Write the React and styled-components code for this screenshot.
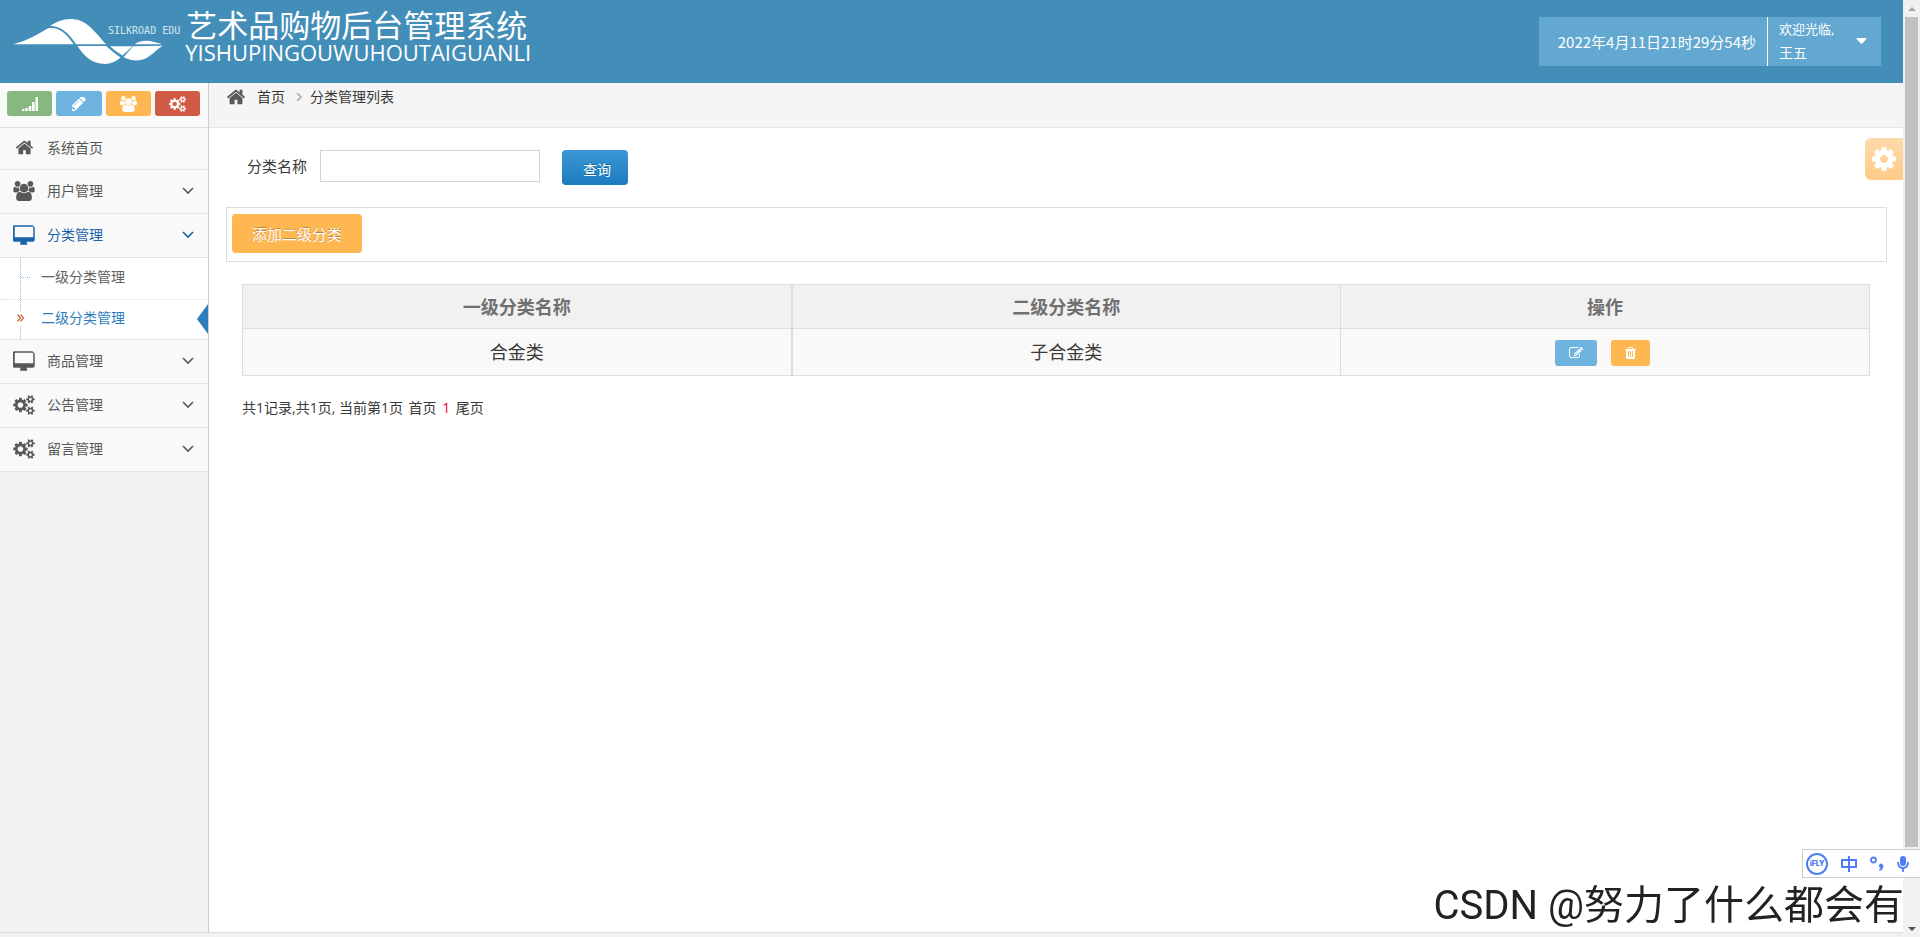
import React from 'react';
import styled, { createGlobalStyle, css } from 'styled-components';

const sans = '"Open Sans", "Noto Sans CJK SC", sans-serif';
const cjk = '"Noto Sans CJK SC", sans-serif';

const GlobalStyle = createGlobalStyle`
  *, *::before, *::after { box-sizing: border-box; }
  body { margin: 0; background: #fff; color: #393939; font: 14px/20px ${sans}; }
  a { color: inherit; text-decoration: none; }
  button { font-family: inherit; border: 0; padding: 0; cursor: pointer; }
  ul, ol { list-style: none; margin: 0; padding: 0; }
`;

/* ---------- icons ---------- */

const paths = {
  home: ['0 0 1792 1792', 'M1472 992v480q0 26-19 45t-45 19h-384v-384h-256v384h-384q-26 0-45-19t-19-45v-480q0-1 .5-3t.5-3l575-474 575 474q1 2 1 6zm223-69l-62 74q-8 9-21 11h-3q-13 0-21-7l-692-577-692 577q-12 8-24 7-13-2-21-11l-62-74q-8-10-7-23.5t11-21.5l719-599q32-26 76-26t76 26l244 204v-195q0-14 9-23t23-9h192q14 0 23 9t9 23v408l219 182q10 8 11 21.5t-7 23.5z'],
  cog: ['128 128 1536 1536', 'M1152 896q0-106-75-181t-181-75-181 75-75 181 75 181 181 75 181-75 75-181zm512-109v222q0 12-8 23t-20 13l-185 28q-19 54-39 91 35 50 107 138 10 12 10 25t-9 23q-27 37-99 108t-94 71q-12 0-26-9l-138-108q-44 23-91 38-16 136-29 186-7 28-36 28h-222q-14 0-24.5-8.5t-11.5-21.5l-28-184q-49-16-90-37l-141 107q-10 9-25 9-14 0-25-11-126-114-165-168-7-10-7-23 0-12 8-23 15-21 51-66.5t54-70.5q-27-50-41-99l-183-27q-13-2-21-12.5t-8-23.5v-222q0-12 8-23t19-13l186-28q14-46 39-92-40-57-107-138-10-12-10-24 0-10 9-23 26-36 98.5-107.5t94.5-71.5q13 0 26 10l138 107q44-23 91-38 16-136 29-186 7-28 36-28h222q14 0 24.5 8.5t11.5 21.5l28 184q49 16 90 37l142-107q9-9 24-9 13 0 25 10 129 119 165 170 7 8 7 22 0 12-8 23-15 21-51 66.5t-54 70.5q26 50 41 98l183 28q13 2 21 12.5t8 23.5z'],
  cogs: ['0 0 1920 1792', 'M896 896q0-106-75-181t-181-75-181 75-75 181 75 181 181 75 181-75 75-181zm768 512q0-52-38-90t-90-38-90 38-38 90q0 53 37.5 90.5t90.5 37.5 90.5-37.5 37.5-90.5zm0-1024q0-52-38-90t-90-38-90 38-38 90q0 53 37.5 90.5t90.5 37.5 90.5-37.5 37.5-90.5zm-384 421v185q0 10-7 19.5t-16 10.5l-155 24q-11 35-32 76 34 48 90 115 7 11 7 20 0 12-7 19-23 30-82.5 89.5t-78.5 59.5q-11 0-21-7l-115-90q-37 19-77 31-11 108-23 155-7 24-30 24h-186q-11 0-20-7.5t-10-17.5l-23-153q-34-10-75-31l-118 89q-7 7-20 7-11 0-21-8-144-133-144-160 0-9 7-19 10-14 41-53t47-61q-23-44-35-82l-152-24q-10-1-17-9.5t-7-19.5v-185q0-10 7-19.5t16-10.5l155-24q11-35 32-76-34-48-90-115-7-11-7-20 0-12 7-20 22-30 82-89t79-59q11 0 21 7l115 90q34-18 77-32 11-108 23-154 7-24 30-24h186q11 0 20 7.5t10 17.5l23 153q34 10 75 31l118-89q8-7 20-7 11 0 21 8 144 133 144 160 0 8-7 19-12 16-42 54t-45 60q23 48 34 82l152 23q10 2 17 10.5t7 19.5zm640 533v140q0 16-149 31-12 27-30 52 51 113 51 138 0 4-4 7-122 71-124 71-8 0-46-47t-52-68q-20 2-30 2t-30-2q-14 21-52 68t-46 47q-2 0-124-71-4-3-4-7 0-25 51-138-18-25-30-52-149-15-149-31v-140q0-16 149-31 13-29 30-52-51-113-51-138 0-4 4-7 4-2 35-20t59-34 30-16q8 0 46 46.5t52 67.5q20-2 30-2t30 2q51-71 92-112l6-2q4 0 124 70 4 3 4 7 0 25-51 138 17 23 30 52 149 15 149 31zm0-1024v140q0 16-149 31-12 27-30 52 51 113 51 138 0 4-4 7-122 71-124 71-8 0-46-47t-52-68q-20 2-30 2t-30-2q-14 21-52 68t-46 47q-2 0-124-71-4-3-4-7 0-25 51-138-18-25-30-52-149-15-149-31v-140q0-16 149-31 13-29 30-52-51-113-51-138 0-4 4-7 4-2 35-20t59-34 30-16q8 0 46 46.5t52 67.5q20-2 30-2t30 2q51-71 92-112l6-2q4 0 124 70 4 3 4 7 0 25-51 138 17 23 30 52 149 15 149 31z'],
  users: ['0 0 1920 1792', 'M593 896q-162 5-265 128h-134q-82 0-138-40.5t-56-118.5q0-353 124-353 6 0 43.5 21t97.5 42.5 119 21.5q67 0 133-23-5 37-5 66 0 139 81 256zm1071 637q0 120-73 189.5t-194 69.5h-874q-121 0-194-69.5t-73-189.5q0-53 3.5-103.5t14-109 26.5-108.5 43-97.5 62-81 85.5-53.5 111.5-20q10 0 43 21.5t73 48 107 48 135 21.5 135-21.5 107-48 73-48 43-21.5q61 0 111.5 20t85.5 53.5 62 81 43 97.5 26.5 108.5 14 109 3.5 103.5zm-1024-1277q0 106-75 181t-181 75-181-75-75-181 75-181 181-75 181 75 75 181zm704 384q0 159-112.5 271.5t-271.5 112.5-271.5-112.5-112.5-271.5 112.5-271.5 271.5-112.5 271.5 112.5 112.5 271.5zm576 225q0 78-56 118.5t-138 40.5h-134q-103-123-265-128 81-117 81-256 0-29-5-66 66 23 133 23 59 0 119-21.5t97.5-42.5 43.5-21q124 0 124 353zm-128-609q0 106-75 181t-181 75-181-75-75-181 75-181 181-75 181 75 75 181z'],
  desktop: ['0 -32 1856 1728', 'M1728 992v-832q0-13-9.5-22.5t-22.5-9.5h-1536q-13 0-22.5 9.5t-9.5 22.5v832q0 13 9.5 22.5t22.5 9.5h1536q13 0 22.5-9.5t9.5-22.5zm128-832v1088q0 66-47 113t-113 47h-544q0 37 16 77.5t32 71 16 43.5q0 26-19 45t-45 19h-512q-26 0-45-19t-19-45q0-14 16-44t32-70 16-78h-544q-66 0-113-47t-47-113v-1088q0-66 47-113t113-47h1536q66 0 113 47t47 113z'],
  pencil: ['256 256 1408 1408', 'M491 1536l91-91-235-235-91 91v107h128v128h107zm523-928q0-22-22-22-10 0-17 7l-542 542q-7 7-7 17 0 22 22 22 10 0 17-7l542-542q7-7 7-17zm-54-192l416 416-832 832h-416v-416zm683 96q0 53-37 90l-166 166-416-416 166-165q36-38 90-38 53 0 91 38l235 234q37 39 37 91z'],
  edit: ['0 128 1792 1536', 'M888 1184l116-116-152-152-116 116v56h96v96h56zm440-720q-16-16-33 1l-350 350q-17 17-1 33t33-1l350-350q17-17 1-33zm80 594v190q0 119-84.5 203.5t-203.5 84.5h-832q-119 0-203.5-84.5t-84.5-203.5v-832q0-119 84.5-203.5t203.5-84.5h832q63 0 117 25 15 7 18 23 3 17-9 29l-49 49q-14 14-32 8-23-6-45-6h-832q-66 0-113 47t-47 113v832q0 66 47 113t113 47h832q66 0 113-47t47-113v-126q0-13 9-22l64-64q15-15 35-7t20 29zm-96-738l288 288-672 672h-288v-288zm444 132l-92 92-288-288 92-92q28-28 68-28t68 28l152 152q28 28 28 68t-28 68z'],
  trash: ['192 128 1408 1536', 'M704 1376v-704q0-14-9-23t-23-9h-64q-14 0-23 9t-9 23v704q0 14 9 23t23 9h64q14 0 23-9t9-23zm256 0v-704q0-14-9-23t-23-9h-64q-14 0-23 9t-9 23v704q0 14 9 23t23 9h64q14 0 23-9t9-23zm256 0v-704q0-14-9-23t-23-9h-64q-14 0-23 9t-9 23v704q0 14 9 23t23 9h64q14 0 23-9t9-23zm-544-992h448l-48-117q-7-9-17-11h-317q-10 2-17 11zm928 32v64q0 14-9 23t-23 9h-96v948q0 83-47 143.5t-113 60.5h-832q-66 0-113-58.5t-47-141.5v-952h-96q-14 0-23-9t-9-23v-64q0-14 9-23t23-9h309l70-167q15-37 54-63t79-26h320q40 0 79 26t54 63l70 167h309q14 0 23 9t9 23z'],
  signal: ['0 0 16 14', 'M0 12h2.500v2h-2.500zM3.400 11h2.500v3h-2.500zM6.800 9h2.500v5h-2.500zM10.100 5h2.500v9h-2.500zM13.500 0h2.500v14h-2.500z'],
  caret: ['0 0 11 6', 'M1 0h9q1 0 .6 .8l-4.400 4.700q-.7 .7-1.400 0l-4.400-4.700q-.4-.8 .6-.8z'],
};

const Svg = styled.svg`
  display: block;
  flex: none;
  fill: currentColor;
`;

const Icon = ({ name, w, h }) => (
  <Svg viewBox={paths[name][0]} width={w} height={h || w} aria-hidden="true">
    <path d={paths[name][1]} />
  </Svg>
);

const Stroke = styled(Svg)`
  fill: none;
  stroke: currentColor;
  stroke-width: ${(p) => p.$w || 2};
`;

const AngleDown = () => (
  <Stroke width="12" height="8" viewBox="0 0 12 8" $w="1.6" aria-hidden="true">
    <path d="M1 1l5 5 5-5" />
  </Stroke>
);

const LogoMark = () => (
  <Svg width="150" height="46" viewBox="0 0 150 46" aria-hidden="true">
    <path d="M0 25.300C14 22 25 15 35 9.300C46 8 53 14 60.500 25.300Z" />
    <path d="M37 7C43 3 50 0 57 0C72 0 78 8 93 25.300H63C56 14 48 7 37 7Z" />
    <path d="M64.500 27H93Q101 34 107.500 38.500C104 42 98 45 92 45C79 45 70 36 64.500 27Z" />
    <path d="M97 27.300H119.500L109.500 36.500Q103 33 97 27.300Z" />
    <path d="M121.500 25.300C126 22 131 21.500 134 21.700C140 22 145 24 149.500 25.300Z" />
    <path d="M120 27.300L149.500 26.800C141 32 136 41.500 123 41.500C117 41.500 114 39.500 110.500 38.300Z" />
  </Svg>
);

/* ---------- page frame ---------- */

const Window = styled.div`
  display: flex;
  min-height: 100vh;
`;

const Page = styled.div`
  flex: 1;
  min-width: 0;
  display: flex;
  flex-direction: column;
`;

const Header = styled.header`
  display: flex;
  justify-content: space-between;
  height: 83px;
  padding: 0 22px 0 13px;
  background: #438eb9;
  color: #fff;
`;

const Brand = styled.a`
  display: flex;
  align-items: flex-start;
  white-space: nowrap;
`;

const LogoBox = styled.span`
  display: grid;
  padding-top: 19px;
  > * { grid-area: 1 / 1; }
`;

const LogoName = styled.span`
  margin: 4px 0 0 95px;
  color: #d5e6f0;
  font: 10px/16px "DejaVu Sans Mono", monospace;
`;

const Titles = styled.span`
  display: flex;
  flex-direction: column;
  padding: 6px 0 0 5px;
`;

const TitleCn = styled.span`
  padding-left: 1px;
  font: 31px/35px ${cjk};
`;

const TitleLatin = styled.span`
  font: 22px/22px ${sans};
`;

const UserBar = styled.div`
  display: flex;
  align-items: stretch;
  height: 49px;
  margin-top: 17px;
  background: #62a8d1;
`;

const Clock = styled.time`
  display: flex;
  align-items: center;
  padding: 0 11px 0 19px;
  border-right: 1px solid #fff;
  font: 15px/20px ${cjk};
`;

const UserButton = styled.button`
  display: flex;
  align-items: center;
  justify-content: space-between;
  width: 113px;
  padding: 0 14px 2px 11px;
  background: none;
  color: #fff;
  font-size: 14px;
  line-height: 24px;
  text-align: left;
`;

const Greeting = styled.small`
  display: block;
  font-size: 13px;
`;

const Body = styled.div`
  flex: 1;
  display: flex;
`;

const Footline = styled.div`
  height: 5px;
  border-top: 1px solid #ddd;
  background: #f1f1f1;
`;

/* ---------- sidebar ---------- */

const Sidebar = styled.aside`
  width: 209px;
  flex: none;
  border-right: 1px solid #ccc;
  background: #f2f2f2;
`;

const Shortcuts = styled.div`
  display: flex;
  gap: 4px;
  padding: 8px 8px 11px 7px;
  border-bottom: 1px solid #ddd;
  background: #fafafa;
`;

const Shortcut = styled.button`
  flex: 1;
  display: flex;
  align-items: center;
  justify-content: center;
  height: 25px;
  border-radius: 3px;
  background: ${(p) => p.$color};
  color: #fff;
`;

const NavItem = styled.li`
  border-bottom: 1px solid #e5e5e5;
`;

const NavLink = styled.a`
  display: flex;
  align-items: center;
  height: ${(p) => (p.$short ? 41 : 43)}px;
  padding: 0 14px 2px 13px;
  background: #f9f9f9;
  color: ${(p) => (p.$open ? '#1963aa' : '#585858')};
`;

const NavIcon = styled.span`
  display: flex;
  justify-content: center;
  width: 22px;
  margin-right: 12px;
`;

const NavText = styled.span`
  flex: 1;
`;

const SubMenu = styled.ul`
  border-top: 1px solid #e5e5e5;
  background: #fff;
`;

const SubItem = styled.li`
  position: relative;
  & + & { border-top: 1px dotted #ddd; }
  &::before {
    content: '';
    position: absolute;
    top: 0;
    bottom: 0;
    left: 20px;
    border-left: 1px dotted #9dbdd6;
  }
`;

const SubLink = styled.a`
  display: flex;
  align-items: center;
  height: ${(p) => (p.$active ? 39 : 41)}px;
  padding-bottom: 3px;
  color: ${(p) => (p.$active ? '#2b7dbc' : '#616161')};
`;

const Branch = styled.span`
  width: 9px;
  margin: 0 11px 0 21px;
  border-top: 1px dotted #9dbdd6;
`;

const Marker = styled.span`
  position: relative;
  display: flex;
  align-items: center;
  height: 14px;
  margin: 0 17px;
  background: #fff;
  color: #c86139;
`;

const ActiveArrow = styled.span`
  position: absolute;
  right: 0;
  top: 4px;
  border: 15px solid transparent;
  border-left-width: 0;
  border-right: 11px solid #2b7dbc;
`;

/* ---------- content ---------- */

const Main = styled.main`
  flex: 1;
  min-width: 0;
`;

const Breadcrumb = styled.nav`
  display: flex;
  align-items: flex-start;
  height: 45px;
  padding: 4px 17px;
  border-bottom: 1px solid #e5e5e5;
  background: #f5f5f5;
`;

const HomeGlyph = styled.span`
  margin-right: 11px;
  color: #585858;
`;

const Separator = styled.span`
  display: flex;
  align-items: center;
  height: 20px;
  margin: 0 8px 0 11px;
  color: #b2b6bf;
`;

const Filter = styled.form`
  display: flex;
  align-items: flex-start;
  padding: 22px 38px;
`;

const FilterLabel = styled.label`
  margin-right: 13px;
  font-size: 15px;
  line-height: 32px;
`;

const TextInput = styled.input`
  width: 220px;
  height: 32px;
  margin-right: 22px;
  border: 1px solid #d5d5d5;
  padding: 0 6px;
  font: 14px ${sans};
`;

const SearchButton = styled.button`
  height: 35px;
  padding: 2px 17px 0 21px;
  border-radius: 4px;
  background: linear-gradient(#3b98d6, #1b7bbf);
  color: #fff;
  font-size: 14px;
  text-shadow: 0 -1px 0 rgba(0, 0, 0, 0.25);
`;

const Toolbar = styled.div`
  display: flex;
  margin: 0 16px 22px 17px;
  padding: 6px 5px 8px;
  border: 1px solid #ddd;
`;

const AddButton = styled.button`
  height: 39px;
  padding: 0 20px;
  border-radius: 4px;
  background: #ffb752;
  color: #fff;
  font-size: 15px;
  text-shadow: 0 -1px 0 rgba(0, 0, 0, 0.25);
`;

const TableWrap = styled.div`
  padding: 0 33px;
`;

const Table = styled.table`
  width: 100%;
  border-collapse: collapse;
  table-layout: fixed;
  font-size: 18px;
  line-height: 24px;
  text-align: center;
`;

const cell = css`
  border: 1px solid #ddd;
  padding: 0;
`;

const HeadCell = styled.th`
  ${cell}
  height: 44px;
  background: #f1f1f1;
  color: #707070;
  font-weight: bold;
  &:first-child { border-right-width: 2px; }
  &:last-child { width: 529px; }
`;

const Cell = styled.td`
  ${cell}
  height: 47px;
  background: #f9f9f9;
  &:first-child { border-right-width: 2px; }
`;

const Actions = styled.div`
  display: flex;
  justify-content: center;
  gap: 14px;
  padding: 2px 6px 0 0;
`;

const IconButton = styled.button`
  display: flex;
  align-items: center;
  height: 26px;
  padding: 0 14px;
  border-radius: 3px;
  background: ${(p) => p.$color};
  color: #fff;
`;

const Pager = styled.p`
  margin: 0;
  padding: 22px 33px;
`;

const PageLink = styled.a`
  margin: 0 2px;
`;

const Current = styled.span`
  color: #e03;
`;

/* ---------- overlays ---------- */

const SettingsButton = styled.button`
  position: fixed;
  top: 138px;
  right: 17px;
  display: flex;
  align-items: center;
  width: 38px;
  height: 42px;
  padding-left: 7px;
  border-radius: 6px 0 0 6px;
  background: linear-gradient(#ffdaaa, #ffcb88);
  color: #fff;
`;

const Scrollbar = styled.div`
  position: sticky;
  top: 0;
  display: flex;
  flex-direction: column;
  align-items: center;
  justify-content: space-between;
  width: 17px;
  height: 100vh;
  padding: 7px 2px 6px;
  background: #f1f1f1;
`;

const ScrollTrack = styled.div`
  flex: 1;
  align-self: stretch;
  padding: 6px 0 80px;
`;

const ScrollThumb = styled.div`
  height: 100%;
  background: #c1c1c1;
`;

const ScrollArrow = styled.span`
  border: 4px solid transparent;
  ${(p) => (p.$up
    ? 'border-top-width: 0; border-bottom-color: #a3a3a3;'
    : 'border-bottom-width: 0; border-top-color: #505050;')}
`;

const InputTool = styled.div`
  position: fixed;
  right: 0;
  bottom: 59px;
  display: flex;
  align-items: center;
  gap: 13px;
  width: 118px;
  height: 29px;
  padding-left: 3px;
  border: 1px solid #ccc;
  border-right: 0;
  background: #fff;
  color: #4f7df9;
`;

const Badge = styled.span`
  display: flex;
  align-items: center;
  justify-content: center;
  width: 22px;
  height: 22px;
  border: 2px solid;
  border-radius: 50%;
  font: 900 7px/8px "Inter", sans-serif;
`;

const Watermark = styled.div`
  position: fixed;
  right: 16px;
  bottom: 5px;
  color: #222;
  font: 40px/52px "Roboto", ${cjk};
  white-space: nowrap;
  pointer-events: none;
`;

const shortcuts = [
  { icon: 'signal', label: '统计', color: '#87b87f', w: 16, h: 14 },
  { icon: 'pencil', label: '编辑', color: '#6fb3e0', w: 14, h: 14 },
  { icon: 'users', label: '用户', color: '#ffb752', w: 17, h: 16 },
  { icon: 'cogs', label: '设置', color: '#d15b47', w: 17, h: 16 },
];

const menu = [
  { text: '系统首页', icon: 'home', w: 19, h: 19 },
  { text: '用户管理', icon: 'users', w: 22, h: 20, arrow: true },
  { text: '分类管理', icon: 'desktop', w: 22, h: 20, arrow: true, open: true },
  { text: '商品管理', icon: 'desktop', w: 22, h: 20, arrow: true },
  { text: '公告管理', icon: 'cogs', w: 22, h: 20, arrow: true },
  { text: '留言管理', icon: 'cogs', w: 22, h: 20, arrow: true },
];

export default function App() {
  return (
    <>
      <GlobalStyle />
      <Window>
        <Page>
          <Header>
            <Brand href="#">
              <LogoBox>
                <LogoMark />
                <LogoName>SILKROAD EDU</LogoName>
              </LogoBox>
              <Titles>
                <TitleCn>艺术品购物后台管理系统</TitleCn>
                <TitleLatin>YISHUPINGOUWUHOUTAIGUANLI</TitleLatin>
              </Titles>
            </Brand>
            <UserBar>
              <Clock>2022年4月11日21时29分54秒</Clock>
              <UserButton type="button">
                <span>
                  <Greeting>欢迎光临,</Greeting>
                  王五
                </span>
                <Icon name="caret" w={11} h={6} />
              </UserButton>
            </UserBar>
          </Header>

          <Body>
            <Sidebar>
              <Shortcuts>
                {shortcuts.map((s) => (
                  <Shortcut key={s.icon} type="button" aria-label={s.label} $color={s.color}>
                    <Icon name={s.icon} w={s.w} h={s.h} />
                  </Shortcut>
                ))}
              </Shortcuts>
              <ul>
                {menu.map((m) => (
                  <NavItem key={m.text}>
                    <NavLink href="#" $short={!m.arrow} $open={m.open}>
                      <NavIcon><Icon name={m.icon} w={m.w} h={m.h} /></NavIcon>
                      <NavText>{m.text}</NavText>
                      {m.arrow && <AngleDown />}
                    </NavLink>
                    {m.open && (
                      <SubMenu>
                        <SubItem>
                          <SubLink href="#"><Branch />一级分类管理</SubLink>
                        </SubItem>
                        <SubItem>
                          <SubLink href="#" $active>
                            <Marker>
                              <Stroke width="7" height="8" viewBox="0 0 7 8" $w="1.2" aria-hidden="true">
                                <path d="M.5 .5l3 3.500-3 3.500M3.500 .5l3 3.500-3 3.500" />
                              </Stroke>
                            </Marker>
                            二级分类管理
                          </SubLink>
                          <ActiveArrow />
                        </SubItem>
                      </SubMenu>
                    )}
                  </NavItem>
                ))}
              </ul>
            </Sidebar>

            <Main>
              <Breadcrumb>
                <HomeGlyph><Icon name="home" w={20} /></HomeGlyph>
                <a href="#">首页</a>
                <Separator>
                  <Stroke width="6" height="8" viewBox="0 0 6 8" aria-hidden="true">
                    <path d="M1 0l4 4-4 4" />
                  </Stroke>
                </Separator>
                <span>分类管理列表</span>
              </Breadcrumb>

              <Filter onSubmit={(e) => e.preventDefault()}>
                <FilterLabel htmlFor="category">分类名称</FilterLabel>
                <TextInput id="category" type="text" />
                <SearchButton type="submit">查询</SearchButton>
              </Filter>

              <Toolbar>
                <AddButton type="button">添加二级分类</AddButton>
              </Toolbar>

              <TableWrap>
                <Table>
                  <thead>
                    <tr>
                      <HeadCell>一级分类名称</HeadCell>
                      <HeadCell>二级分类名称</HeadCell>
                      <HeadCell>操作</HeadCell>
                    </tr>
                  </thead>
                  <tbody>
                    <tr>
                      <Cell>合金类</Cell>
                      <Cell>子合金类</Cell>
                      <Cell>
                        <Actions>
                          <IconButton type="button" aria-label="编辑" $color="#6fb3e0">
                            <Icon name="edit" w={14} h={12} />
                          </IconButton>
                          <IconButton type="button" aria-label="删除" $color="#ffb752">
                            <Icon name="trash" w={11} h={12} />
                          </IconButton>
                        </Actions>
                      </Cell>
                    </tr>
                  </tbody>
                </Table>
              </TableWrap>

              <Pager>
                共1记录,共1页, 当前第1页 <PageLink href="#">首页</PageLink> <Current>1</Current> <PageLink href="#">尾页</PageLink>
              </Pager>
            </Main>
          </Body>
          <Footline />
        </Page>

        <Scrollbar aria-hidden="true">
          <ScrollArrow $up />
          <ScrollTrack><ScrollThumb /></ScrollTrack>
          <ScrollArrow />
        </Scrollbar>
      </Window>

      <SettingsButton type="button" aria-label="设置">
        <Icon name="cog" w={24} />
      </SettingsButton>

      <InputTool>
        <Badge>iFLY</Badge>
        <Stroke width="16" height="16" viewBox="0 0 16 16" aria-hidden="true">
          <path d="M1 4h14v7h-14zM8 0v16" />
        </Stroke>
        <Svg width="14" height="16" viewBox="0 0 14 16" aria-hidden="true">
          <circle cx="3.500" cy="4" r="2.500" fill="none" stroke="currentColor" strokeWidth="1.800" />
          <path d="M10.500 7.500a2.800 2.800 0 0 1 2.800 3.200q-.3 3.300-4 4.300v-1.600q1.200-.4 1.500-1.200a2.500 2.500 0 0 1-.3-4.700z" />
        </Svg>
        <Svg width="12" height="16" viewBox="0 0 12 16" aria-hidden="true">
          <rect x="3" y="0" width="6" height="10" rx="3" />
          <path d="M1 6q0 6 5 6t5-6M6 12v4" fill="none" stroke="currentColor" strokeWidth="1.800" />
        </Svg>
      </InputTool>

      <Watermark>CSDN @努力了什么都会有</Watermark>
    </>
  );
}
